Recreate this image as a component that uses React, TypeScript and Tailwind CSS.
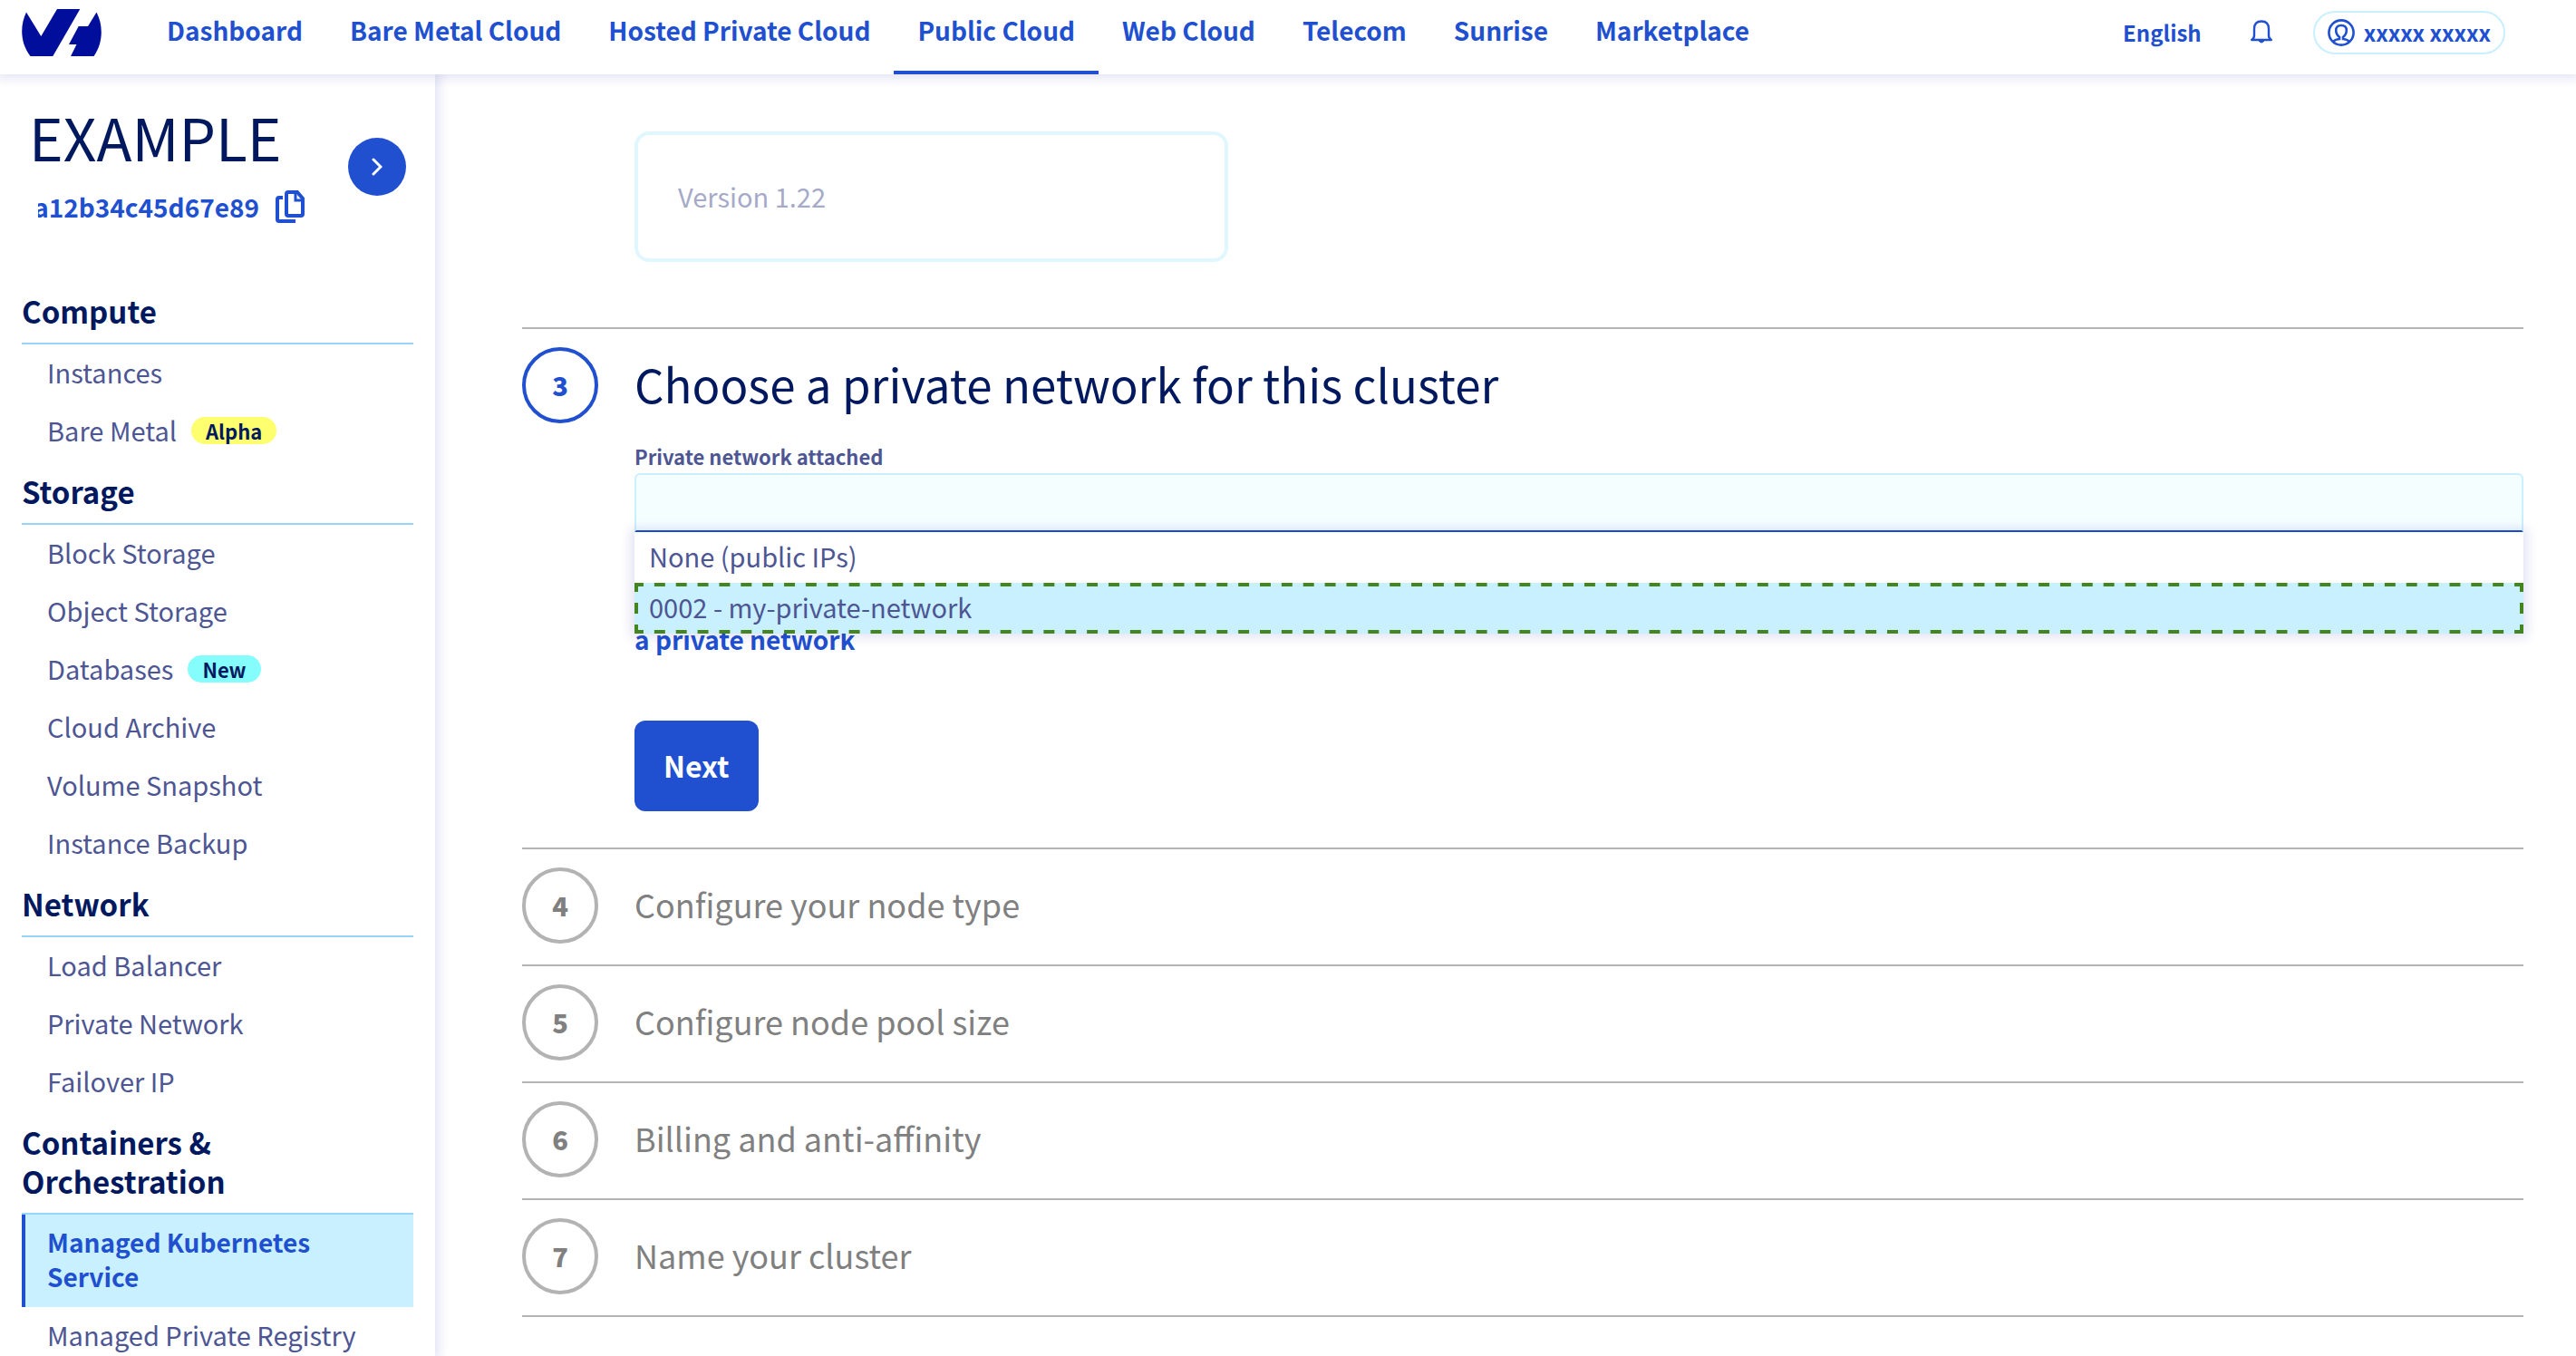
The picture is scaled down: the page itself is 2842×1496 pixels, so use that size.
import React, { useState } from "react";

type Item = { label: string; badge?: { text: string; tone: "alpha" | "new" }; active?: boolean };

const NAV = [
  "Dashboard",
  "Bare Metal Cloud",
  "Hosted Private Cloud",
  "Public Cloud",
  "Web Cloud",
  "Telecom",
  "Sunrise",
  "Marketplace",
];

const SECTIONS: { title: string; items: Item[] }[] = [
  {
    title: "Compute",
    items: [{ label: "Instances" }, { label: "Bare Metal", badge: { text: "Alpha", tone: "alpha" } }],
  },
  {
    title: "Storage",
    items: [
      { label: "Block Storage" },
      { label: "Object Storage" },
      { label: "Databases", badge: { text: "New", tone: "new" } },
      { label: "Cloud Archive" },
      { label: "Volume Snapshot" },
      { label: "Instance Backup" },
    ],
  },
  {
    title: "Network",
    items: [{ label: "Load Balancer" }, { label: "Private Network" }, { label: "Failover IP" }],
  },
  {
    title: "Containers & Orchestration",
    items: [{ label: "Managed Kubernetes Service", active: true }, { label: "Managed Private Registry" }],
  },
];

const STEPS = [
  { n: 4, title: "Configure your node type" },
  { n: 5, title: "Configure node pool size" },
  { n: 6, title: "Billing and anti-affinity" },
  { n: 7, title: "Name your cluster" },
];

function Logo() {
  return (
    <svg viewBox="0 0 88 52" className="h-[52px] w-[88px]" fill="#000e9c" aria-hidden="true">
      <path d="M5 3.5 L21.3 30 L39 0 H64.3 L34.3 52 H9.5 C-2 37 -2 18 5 3.5 Z" />
      <path d="M82.5 3.5 C90 18 90 37 79.5 52 H54 L60.5 39 H52 L62.7 19 H73 Z" />
    </svg>
  );
}

function CopyIcon() {
  return (
    <svg viewBox="0 0 32 36" className="h-9 w-8" fill="none" stroke="#2050d0" strokeWidth="4" aria-hidden="true">
      <path d="M14 2 H24 L30 9 V26 Q30 28 28 28 H14 Q12 28 12 26 V4 Q12 2 14 2 Z" />
      <path d="M22 2 V11 H30" strokeWidth="3" />
      <path d="M8 8 H4 Q2 8 2 10 V32 Q2 34 4 34 H22" />
    </svg>
  );
}

function BellIcon() {
  return (
    <svg viewBox="0 0 24 26" className="h-[26px] w-6" fill="none" stroke="#2050d0" strokeWidth="2.4" aria-hidden="true">
      <path d="M1.2 22 H22.8 Q20 20.5 20 17 V10 Q20 1.5 12 1.5 Q4 1.5 4 10 V17 Q4 20.5 1.2 22 Z" strokeLinejoin="round" />
      <path d="M9 23 Q12 27 15 23 Z" fill="#2050d0" strokeWidth="1" />
    </svg>
  );
}

function UserIcon() {
  return (
    <svg viewBox="0 0 30 30" className="size-[30px]" fill="none" stroke="#2050d0" strokeWidth="2.6" aria-hidden="true">
      <circle cx="15" cy="15" r="13.6" />
      <path d="M6 25 Q8 22.5 13 22 V20 Q9.2 17 9.2 12.5 Q9.2 7 15 7 Q20.8 7 20.8 12.5 Q20.8 17 17 20 V22 Q22 22.5 24 25" />
    </svg>
  );
}

function DashedFrame() {
  return (
    <svg className="pointer-events-none absolute inset-0 size-full" stroke="#458520" strokeWidth="8" aria-hidden="true">
      <g strokeDasharray="12 12" strokeDashoffset="2">
        <line x1="0" y1="0" x2="100%" y2="0" pathLength="2096" />
        <line x1="0" y1="100%" x2="100%" y2="100%" pathLength="2096" />
        <line x1="0" y1="0" x2="0" y2="100%" pathLength="56" />
        <line x1="100%" y1="0" x2="100%" y2="100%" pathLength="56" />
      </g>
    </svg>
  );
}

function Badge({ text, tone }: { text: string; tone: "alpha" | "new" }) {
  return (
    <span
      className={
        "mt-[2px] flex h-[30px] items-center rounded-full px-4 text-[22px] leading-[30px] font-bold text-[#00185e] " +
        (tone === "alpha" ? "bg-[#fdff6e]" : "bg-[#85fdfd]")
      }
    >
      {text}
    </span>
  );
}

function StepNumber({ n, active }: { n: number; active?: boolean }) {
  return (
    <span
      className={
        "flex size-[84px] shrink-0 items-center justify-center rounded-full border-4 pb-[2px] text-[29px] font-black " +
        (active ? "border-[#2050d0] text-[#2050d0]" : "border-[#b3b3b3] text-[#808080]")
      }
    >
      {n}
    </span>
  );
}

export default function App() {
  const [network, setNetwork] = useState("");
  return (
    <div className="flex h-screen flex-col overflow-hidden bg-white font-['Noto_Sans_CJK_SC','Noto_Sans',sans-serif] text-[29px] leading-[38px] text-[#4d5693]">
      <header className="relative z-20 flex h-[82px] shrink-0 items-start bg-white pl-6 shadow-[0_0_12px_4px_rgba(0,14,156,0.12)]">
        <a href="#home" aria-label="Home" className="mt-[10px] mr-[46px]">
          <Logo />
        </a>
        <nav className="flex h-full text-[28px]">
          {NAV.map((label) => (
            <a
              key={label}
              href="#nav"
              className={
                "h-full border-b-4 px-[26px] pt-[14px] font-bold whitespace-nowrap text-[#2050d0] " +
                (label === "Public Cloud" ? "border-[#2050d0]" : "border-transparent")
              }
            >
              {label}
            </a>
          ))}
        </nav>
        <div className="mt-3 mr-[78px] ml-auto flex h-12 items-center text-[24px] font-bold text-[#2050d0]">
          <button type="button">English</button>
          <button type="button" aria-label="Notifications" className="mr-[45px] ml-[54px] pb-[2px]">
            <BellIcon />
          </button>
          <button
            type="button"
            className="flex h-12 items-center gap-[10px] rounded-full border-2 border-[#c8f0ff] px-[14px]"
          >
            <UserIcon />
            xxxxx xxxxx
          </button>
        </div>
      </header>

      <div className="flex min-h-0 flex-1">
        <aside className="relative z-10 w-[480px] shrink-0 overflow-hidden bg-white px-6 shadow-[0_0_12px_4px_rgba(0,14,156,0.12)]">
          <div className="flex h-[227px] justify-between px-2">
            <div className="pt-5">
              <h1 className="text-[64px] leading-[96px] text-[#00185e]">EXAMPLE</h1>
              <div className="mt-[11px] flex items-center gap-[18px] pl-[10px] text-[28px] font-bold text-[#2050d0]">
                <span className="flex w-[244px] justify-end overflow-hidden">a12b34c45d67e89</span>
                <button type="button" aria-label="Copy">
                  <CopyIcon />
                </button>
              </div>
            </div>
            <button
              type="button"
              aria-label="Expand"
              className="mt-[70px] flex size-16 items-center justify-center rounded-full bg-[#2050d0]"
            >
              <svg viewBox="0 0 12 20" className="h-5 w-3" fill="none" stroke="white" strokeWidth="3" strokeLinecap="round">
                <path d="M2 2 L10 10 L2 18" />
              </svg>
            </button>
          </div>
          <nav>
            {SECTIONS.map((s) => (
              <section key={s.title}>
                <h2 className="border-b-2 border-[#96d5f9] py-[13px] text-[33px] leading-[43px] font-bold text-[#00185e]">
                  <span className="block w-72">{s.title}</span>
                </h2>
                <ul>
                  {s.items.map((it) => (
                    <li key={it.label}>
                      <a
                        href="#item"
                        className={
                          "flex items-center gap-4 border-l-4 pt-[11px] pb-[15px] pl-6 " +
                          (it.active
                            ? "border-[#2050d0] bg-[#c8f0ff] pr-20 text-[28px] font-bold text-[#2050d0]"
                            : "border-transparent whitespace-nowrap")
                        }
                      >
                        {it.label}
                        {it.badge && <Badge {...it.badge} />}
                      </a>
                    </li>
                  ))}
                </ul>
              </section>
            ))}
          </nav>
        </aside>

        <main className="min-w-0 flex-1 pr-[58px] pl-24">
          <div className="mt-[63px] mb-[72px] ml-[124px] flex h-36 w-[655px] items-center rounded-2xl border-4 border-[#e0f7ff] pb-[2px] pl-11 text-[#a6aac9]">
            Version 1.22
          </div>

          <section className="flex items-start gap-10 border-t-2 border-[#b3b3b3] pt-5">
            <StepNumber n={3} active />
            <div className="min-w-0 flex-1">
              <h2 className="h-[98px] text-[51px] leading-[80px] text-[#00185e]">Choose a private network for this cluster</h2>
              <label htmlFor="network" className="block h-[41px] text-[22px] leading-[44px] font-bold">
                Private network attached
              </label>
              <div className="relative">
                <input
                  id="network"
                  type="text"
                  value={network}
                  onChange={(e) => setNetwork(e.target.value)}
                  className="block h-[65px] w-full rounded-t-md border-2 border-[#c8f0ff] border-b-[#2050d0] bg-[#f5feff] px-4 outline-none"
                />
                <ul
                  role="listbox"
                  aria-label="Private network attached"
                  className="absolute inset-x-0 top-full bg-white shadow-[0_0_12px_4px_rgba(0,14,156,0.12)]"
                >
                  <li role="option" aria-selected="false" className="h-14 px-4 leading-[52px]">
                    None (public IPs)
                  </li>
                  <li role="option" aria-selected="true" className="relative h-14 bg-[#c8f0ff] px-4 leading-[52px]">
                    0002 - my-private-network
                    <DashedFrame />
                  </li>
                </ul>
              </div>
              <a href="#private" className="mt-[99px] block text-[28px] font-bold text-[#2050d0]">
                a private network
              </a>
              <button
                type="button"
                className="mt-[71px] mb-10 block h-[100px] rounded-xl bg-[#2050d0] px-8 pb-[2px] text-[32px] font-bold text-white"
              >
                Next
              </button>
            </div>
          </section>

          {STEPS.map((s) => (
            <section key={s.n} className="flex items-center gap-10 border-t-2 border-[#b3b3b3] pt-5 pb-[23px]">
              <StepNumber n={s.n} />
              <h2 className="pb-1 text-[36px] text-[#808080]">{s.title}</h2>
            </section>
          ))}
          <hr className="border-t-2 border-[#b3b3b3]" />
        </main>
      </div>
    </div>
  );
}
